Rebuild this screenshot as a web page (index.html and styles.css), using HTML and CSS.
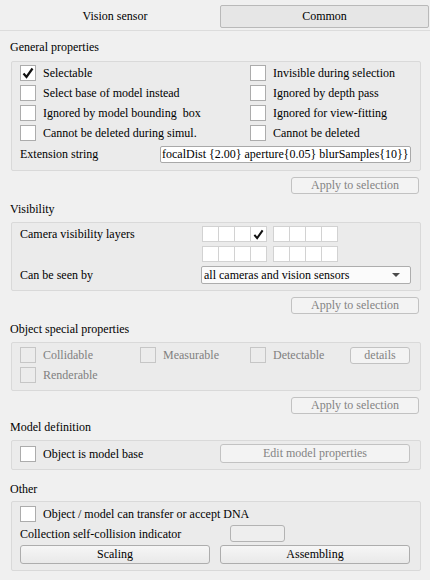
FILE: index.html
```html
<!DOCTYPE html>
<html>
<head>
<meta charset="utf-8">
<link rel="stylesheet" href="styles.css">
</head>
<body>
<div class="tabbar">
  <div class="tab tab-active">Vision sensor</div>
  <div class="tab tab-idle">Common</div>
</div>
<div class="panel">
  <div class="title title-first">General properties</div>
  <div class="group general">
    <label class="check"><span class="box"><svg class="tick" viewBox="0 0 12 12" width="12" height="12"><path d="M1.5 6.5 L4.5 10 L10.5 1.5" fill="none" stroke="#111" stroke-width="2.2"/></svg></span>Selectable</label>
    <label class="check"><span class="box"></span>Invisible during selection</label>
    <label class="check"><span class="box"></span>Select base of model instead</label>
    <label class="check"><span class="box"></span>Ignored by depth pass</label>
    <label class="check"><span class="box"></span>Ignored by model bounding&nbsp; box</label>
    <label class="check"><span class="box"></span>Ignored for view-fitting</label>
    <label class="check"><span class="box"></span>Cannot be deleted during simul.</label>
    <label class="check"><span class="box"></span>Cannot be deleted</label>
    <div class="ext-row">
      <span>Extension string</span>
      <div class="textfield">focalDist {2.00} aperture{0.05} blurSamples{10}}</div>
    </div>
  </div>
  <div class="apply-row"><div class="btn btn-apply disabled">Apply to selection</div></div>

  <div class="title">Visibility</div>
  <div class="group vis">
    <span class="vis-label">Camera visibility layers</span>
    <div class="layers">
      <div class="cells"><span></span><span></span><span></span><span><svg class="tick" viewBox="0 0 12 12" width="11" height="11"><path d="M1.5 6.5 L4.5 10 L10.5 1.5" fill="none" stroke="#111" stroke-width="2.2"/></svg></span></div>
      <div class="cells"><span></span><span></span><span></span><span></span></div>
    </div>
    <span></span>
    <div class="layers">
      <div class="cells"><span></span><span></span><span></span><span></span></div>
      <div class="cells"><span></span><span></span><span></span><span></span></div>
    </div>
    <span class="vis-label">Can be seen by</span>
    <div class="combo"><span>all cameras and vision sensors</span><span class="arrow"></span></div>
  </div>
  <div class="apply-row"><div class="btn btn-apply disabled">Apply to selection</div></div>

  <div class="title">Object special properties</div>
  <div class="group special">
    <label class="check disabled"><span class="box"></span>Collidable</label>
    <label class="check disabled"><span class="box"></span>Measurable</label>
    <label class="check disabled"><span class="box"></span>Detectable</label>
    <div class="btn btn-details disabled">details</div>
    <label class="check disabled"><span class="box"></span>Renderable</label>
  </div>
  <div class="apply-row"><div class="btn btn-apply disabled">Apply to selection</div></div>

  <div class="title title-model">Model definition</div>
  <div class="group model">
    <label class="check"><span class="box"></span>Object is model base</label>
    <div class="btn btn-wide disabled">Edit model properties</div>
  </div>

  <div class="title title-other">Other</div>
  <div class="group other">
    <label class="check span-all"><span class="box"></span>Object / model can transfer or accept DNA</label>
    <span class="coll-label">Collection self-collision indicator</span>
    <div class="coll-field"></div>
    <div class="btn btn-wide btn-left">Scaling</div>
    <div class="btn btn-wide btn-right">Assembling</div>
  </div>
</div>
</body>
</html>
```

FILE: styles.css
```css
html, body {
  margin: 0;
  padding: 0;
}
body {
  width: 430px;
  height: 580px;
  overflow: hidden;
  background: #f0f0f0;
  font-family: "Liberation Serif", "DejaVu Serif", serif;
  font-size: 12px;
  color: #000;
}
.tabbar {
  display: flex;
  height: 30px;
  border-bottom: 1px solid #dcdcdc;
}
.tab {
  display: flex;
  align-items: center;
  justify-content: center;
  box-sizing: border-box;
}
.tab-active {
  width: 220px;
  padding-left: 10px;
  padding-top: 3px;
}
.tab-idle {
  width: 209px;
  height: 23px;
  margin-top: 5px;
  border: 1px solid #b9b9b9;
  border-radius: 2px;
  background: #e6e6e6;
}
.panel {
  padding: 0 9px 0 11px;
}
.title {
  line-height: 14px;
  padding: 8px 0 6px 0;
  margin-left: -1px;
}
.title-first {
  padding-top: 9px;
  padding-bottom: 7px;
}
.title-model {
  padding-top: 6px;
}
.title-other {
  padding-top: 12px;
  padding-bottom: 5px;
}
.group {
  box-sizing: border-box;
  width: 410px;
  border: 1px solid #d9d9d9;
  border-radius: 2px;
  background: #ebebeb;
}
.check {
  display: flex;
  align-items: center;
  gap: 7px;
  height: 16px;
  line-height: 16px;
  white-space: nowrap;
}
.box {
  box-sizing: border-box;
  width: 16px;
  height: 16px;
  flex: 0 0 16px;
  border: 1px solid #acacac;
  background: #fff;
  display: flex;
  align-items: center;
  justify-content: center;
}
.tick {
  display: block;
}
.check.disabled {
  color: #808080;
}
.check.disabled .box {
  border-color: #c6c6c6;
  background: #ececec;
}
.general {
  display: grid;
  grid-template-columns: 230px 1fr;
  row-gap: 4px;
  padding: 3px 9px 7px 8px;
}
.ext-row {
  grid-column: 1 / span 2;
  display: flex;
  align-items: center;
  margin-top: 1px;
}
.textfield {
  box-sizing: border-box;
  margin-left: auto;
  width: 251px;
  height: 17px;
  line-height: 15px;
  border: 1px solid #a9a9a9;
  border-radius: 2px;
  background: #fff;
  padding-left: 1px;
  white-space: nowrap;
  overflow: hidden;
}
.apply-row {
  display: flex;
  justify-content: flex-end;
  padding-right: 2px;
  margin-top: 6px;
}
.btn {
  box-sizing: border-box;
  display: flex;
  align-items: center;
  justify-content: center;
  border: 1px solid #adadad;
  border-radius: 3px;
  background: linear-gradient(#f6f6f6, #e9e9e9);
  white-space: nowrap;
}
.btn.disabled {
  color: #838383;
  border-color: #c2c2c2;
  background: #f3f3f3;
}
.btn-apply {
  width: 128px;
  height: 17px;
}
.vis {
  display: grid;
  grid-template-columns: 181px 210px;
  row-gap: 4px;
  padding: 3px 9px 6px 8px;
  align-items: center;
}
.vis-label {
  line-height: 16px;
}
.layers {
  display: flex;
  gap: 6px;
  padding-left: 1px;
}
.cells {
  display: flex;
  height: 16px;
  box-sizing: border-box;
  border: 1px solid #d2d2d2;
  border-right: none;
  background: #fff;
}
.cells span {
  width: 15px;
  height: 14px;
  border-right: 1px solid #d2d2d2;
  display: flex;
  align-items: center;
  justify-content: center;
}
.combo {
  box-sizing: border-box;
  height: 18px;
  display: flex;
  align-items: center;
  justify-content: space-between;
  border: 1px solid #adadad;
  border-radius: 2px;
  background: #fbfbfb;
  padding: 0 10px 0 2px;
}
.arrow {
  width: 0;
  height: 0;
  border-left: 4px solid transparent;
  border-right: 4px solid transparent;
  border-top: 4px solid #4a4a4a;
}
.special {
  display: grid;
  grid-template-columns: 120px 110px 100px 60px;
  grid-template-rows: 16px 16px;
  row-gap: 4px;
  padding: 4px 9px 7px 8px;
  align-items: center;
}
.btn-details {
  height: 17px;
}
.model {
  display: grid;
  grid-template-columns: 200px 190px;
  padding: 3px 9px 6px 8px;
  align-items: center;
}
.btn-wide {
  height: 19px;
}
.other {
  display: grid;
  grid-template-columns: 190px 10px 10px 55px 125px;
  padding: 4px 9px 6px 8px;
  row-gap: 3px;
  align-items: center;
}
.span-all {
  grid-column: 1 / -1;
}
.coll-label {
  grid-column: 1 / span 3;
  line-height: 16px;
  white-space: nowrap;
}
.coll-field {
  grid-column: 4;
  box-sizing: border-box;
  height: 17px;
  border: 1px solid #b3b3b3;
  border-radius: 3px;
  background: #eeeeee;
}
.btn-left {
  grid-column: 1;
}
.btn-right {
  grid-column: 3 / span 3;
}
```
